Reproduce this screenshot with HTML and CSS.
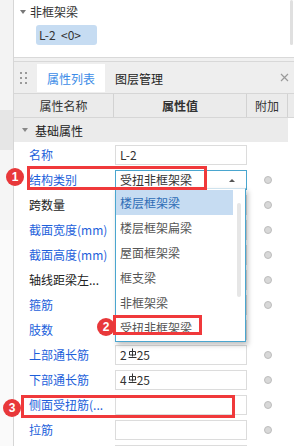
FILE: index.html
```html
<!doctype html>
<html>
<head>
<meta charset="utf-8">
<link rel="stylesheet" href="styles.css">
<title>属性列表</title>
</head>
<body>

<div class="app">
  <div class="rail">
    <div class="rail-a"></div>
    <div class="rail-b"></div>
    <div class="rail-c"></div>
    <div class="rail-d"></div>
  </div>

  <div class="main">
    <div class="floor-box">
      <div class="tree-node"><span class="caret"></span>非框架梁</div>
      <div class="chip">L-2&nbsp; &lt;0&gt;</div>
      <div class="box-scroll"></div>
    </div>

    <div class="panel">
      <div class="tabbar">
        <div class="grip"><i></i><i></i><i></i><i></i><i></i><i></i></div>
        <div class="tab tab-active">属性列表</div>
        <div class="tab">图层管理</div>
        <div class="tab-close">
          <svg width="9" height="9" viewBox="0 0 9 9"><path d="M1 1L8 8M8 1L1 8" stroke="#9a9a9a" stroke-width="1.2" fill="none"/></svg>
        </div>
      </div>

      <div class="thead">
        <div class="th">属性名称</div>
        <div class="th th-sort">属性值</div>
        <div class="th">附加</div>
      </div>

      <div class="group"><span class="caret"></span>基础属性</div>

      <div class="rows">
        <div class="row">
          <div class="name link">名称</div>
          <div class="val"><div class="input">L-2</div></div>
          <div class="extra"></div>
        </div>

        <div class="row">
          <div class="name link">结构类别</div>
          <div class="val">
            <div class="input select">受扭非框架梁<span class="arrow"></span></div>
            <div class="dropdown">
              <div class="item item-on">楼层框架梁</div>
              <div class="item">楼层框架扁梁</div>
              <div class="item">屋面框架梁</div>
              <div class="item">框支梁</div>
              <div class="item">非框架梁</div>
              <div class="item">受扭非框架梁
                <div class="mark mark-2"></div>
                <div class="badge badge-2">2</div>
              </div>
              <div class="dd-scroll"></div>
            </div>
          </div>
          <div class="extra"><span class="radio"></span></div>
          <div class="mark mark-1"></div>
          <div class="badge badge-1">1</div>
        </div>

        <div class="row">
          <div class="name">跨数量</div>
          <div class="val"><div class="input"></div></div>
          <div class="extra"><span class="radio"></span></div>
        </div>

        <div class="row">
          <div class="name link">截面宽度(mm)</div>
          <div class="val"><div class="input"></div></div>
          <div class="extra"><span class="radio"></span></div>
        </div>

        <div class="row">
          <div class="name link">截面高度(mm)</div>
          <div class="val"><div class="input"></div></div>
          <div class="extra"><span class="radio"></span></div>
        </div>

        <div class="row">
          <div class="name">轴线距梁左...</div>
          <div class="val"><div class="input"></div></div>
          <div class="extra"><span class="radio"></span></div>
        </div>

        <div class="row">
          <div class="name link">箍筋</div>
          <div class="val"><div class="input"></div></div>
          <div class="extra"><span class="radio"></span></div>
        </div>

        <div class="row">
          <div class="name link">肢数</div>
          <div class="val"><div class="input"></div></div>
          <div class="extra"></div>
        </div>

        <div class="row">
          <div class="name link">上部通长筋</div>
          <div class="val"><div class="input">2<svg class="rebar" width="9" height="11" viewBox="0 0 9 11"><path d="M4.5 0.5V8.5M1.5 3.5H7.5V7H1.5ZM0.5 9.5H8.5" stroke="#333" stroke-width="1" fill="none"/></svg>25</div></div>
          <div class="extra"><span class="radio"></span></div>
        </div>

        <div class="row">
          <div class="name link">下部通长筋</div>
          <div class="val"><div class="input">4<svg class="rebar" width="9" height="11" viewBox="0 0 9 11"><path d="M4.5 0.5V8.5M1.5 3.5H7.5V7H1.5ZM0.5 9.5H8.5" stroke="#333" stroke-width="1" fill="none"/></svg>25</div></div>
          <div class="extra"><span class="radio"></span></div>
        </div>

        <div class="row">
          <div class="name link">侧面受扭筋(...</div>
          <div class="val"><div class="input"></div></div>
          <div class="extra"><span class="radio"></span></div>
          <div class="mark mark-3"></div>
          <div class="badge badge-3">3</div>
        </div>

        <div class="row">
          <div class="name link">拉筋</div>
          <div class="val"><div class="input"></div></div>
          <div class="extra"><span class="radio"></span></div>
        </div>

        <div class="row">
          <div class="name"></div>
          <div class="val"><div class="input"></div></div>
          <div class="extra"></div>
        </div>
      </div>
    </div>
  </div>
</div>

</body>
</html>
```

FILE: styles.css
```css
body {
  margin: 0;
  background: #f0f0f0;
  font: 12px "Noto Sans CJK SC", "Open Sans", sans-serif;
  color: #333;
  width: 294px;
  height: 446px;
  overflow: hidden;
}

.app {
  display: flex;
  height: 446px;
  overflow: hidden;
}

/* left strip of the neighbouring panel */
.rail {
  width: 13px;
  flex: none;
  display: flex;
  flex-direction: column;
}

.rail-a { height: 110px; background: #f3f3f3; }
.rail-b { height: 40px; background: #e6e6e6; }
.rail-c { height: 80px; background: #f5f5f5; }
.rail-d { flex: 1; background: #fafafa; }

.main {
  flex: 1;
  display: flex;
  flex-direction: column;
  border-left: 1px solid #d6d6d6;
}

/* floor / component tree */
.floor-box {
  flex: none;
  height: 57px;
  background: #fff;
  border-bottom: 1px solid #d9d9d9;
  position: relative;
}

.tree-node {
  display: flex;
  align-items: center;
  padding: 4px 0 0 6px;
  height: 16px;
  line-height: 16px;
}

.caret {
  width: 0;
  height: 0;
  border-left: 3px solid transparent;
  border-right: 3px solid transparent;
  border-top: 4px solid #777;
  margin-right: 4px;
}

.chip {
  display: inline-block;
  margin: 5px 0 0 22px;
  height: 20px;
  line-height: 20px;
  width: 58px;
  padding-left: 3px;
  background: #c6dcf2;
  border-radius: 3px;
  color: #333;
}

.box-scroll {
  position: absolute;
  right: 1px;
  top: 0;
  width: 3px;
  height: 45px;
  background: #e0e0e0;
  border-radius: 2px;
}

/* property panel */
.panel {
  flex: none;
  margin-top: 3px;
  background: #fff;
  border-top: 1px solid #d8d8d8;
}

.tabbar {
  height: 31px;
  background: #eeeeee;
  display: flex;
  align-items: stretch;
}

.grip {
  width: 23px;
  display: grid;
  grid-template-columns: 2px 2px;
  column-gap: 3px;
  row-gap: 3px;
  align-content: center;
  padding-left: 6px;
  box-sizing: border-box;
}

.grip i {
  width: 2px;
  height: 2px;
  background: #9a9a9a;
}

.tab {
  width: 68px;
  margin: 2px 0 1px;
  display: flex;
  align-items: center;
  justify-content: center;
  font-size: 12px;
  color: #222;
}

.tab-active {
  background: #fff;
  color: #3c8ce7;
}

.tab-close {
  margin-left: auto;
  width: 14px;
  display: flex;
  align-items: center;
}

.thead {
  display: grid;
  grid-template-columns: 100px 133px 41px 1fr;
  height: 23px;
  background: #ebebeb;
  border-top: 1px solid #d6d6d6;
  border-bottom: 1px solid #d6d6d6;
}

.th {
  border-right: 1px solid #d2d2d2;
  display: flex;
  align-items: center;
  justify-content: center;
  color: #333;
}

.th-sort {
  font-weight: bold;
}

.group {
  height: 24px;
  background: #ebebeb;
  display: flex;
  align-items: center;
  padding-left: 8px;
  margin-right: 6px;
  color: #222;
}

.group .caret {
  margin-right: 7px;
  border-top-color: #888;
}

.row {
  position: relative;
  display: grid;
  grid-template-columns: 100px 133px 41px 1fr;
  height: 25px;
}

.name {
  padding-left: 15px;
  display: flex;
  align-items: center;
  color: #222;
  white-space: nowrap;
}

.link {
  color: #1d5fdb;
}

.val {
  position: relative;
}

.input {
  margin: 3px 0 0 1px;
  width: 132px;
  height: 20px;
  box-sizing: border-box;
  border: 1px solid #dcdcdc;
  padding-left: 4px;
  line-height: 18px;
  color: #333;
  display: flex;
  align-items: center;
}

.rebar {
  margin: -4px 0 0 1px;
}

.select {
  position: relative;
  border-color: #4aa6cf;
}

.arrow {
  position: absolute;
  right: 11px;
  top: 8px;
  border-left: 3px solid transparent;
  border-right: 3px solid transparent;
  border-bottom: 3px solid #555;
}

.extra {
  display: flex;
  align-items: center;
  justify-content: center;
}

.radio {
  width: 8px;
  height: 8px;
  border-radius: 50%;
  background: #d8d8d8;
  border: 1px solid #bdbdbd;
  box-sizing: border-box;
}

/* open dropdown of 结构类别 */
.dropdown {
  position: absolute;
  left: 1px;
  top: 21px;
  width: 131px;
  box-sizing: border-box;
  padding: 1px 0;
  background: #fff;
  border: 1px solid #4aa6cf;
  border-top-color: #cfe3ee;
  box-shadow: 2px 3px 5px rgba(0, 0, 0, 0.25);
  z-index: 5;
}

.item {
  position: relative;
  height: 25px;
  line-height: 25px;
  margin-right: 12px;
  padding-left: 4px;
  color: #555;
}

.item-on {
  background: #c6dcf2;
  color: #2f6db6;
}

.dd-scroll {
  position: absolute;
  right: 4px;
  top: 14px;
  width: 4px;
  height: 94px;
  background: #e6e6e6;
  border-radius: 2px;
}

/* annotation marks */
.mark {
  position: absolute;
  border: 3px solid #f0393b;
  box-sizing: border-box;
  z-index: 6;
}

.mark-1 { left: 13px; top: -1px; width: 180px; height: 24px; }
.mark-2 { left: -3px; top: 0; width: 89px; height: 20px; }
.mark-3 { left: 7px; top: 3px; width: 214px; height: 23px; }

.badge {
  position: absolute;
  width: 18px;
  height: 18px;
  border-radius: 50%;
  background: #e8383a;
  color: #fff;
  font: bold 12px/18px "Liberation Sans", sans-serif;
  text-align: center;
  z-index: 7;
}

.badge-1 { left: -8px; top: 1px; }
.badge-2 { left: -19px; top: 3px; }
.badge-3 { left: -11px; top: 7px; }
```
